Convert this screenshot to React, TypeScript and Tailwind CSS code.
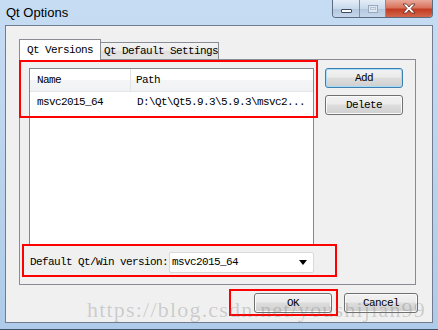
import React from 'react';

const mono = "font-['Liberation_Mono',monospace] text-[11px] tracking-[-0.6px] text-black whitespace-nowrap";

const btnBase =
  'flex items-center justify-center rounded-[3px] border bg-[linear-gradient(to_bottom,#f2f2f2_0%,#ebebeb_45%,#dddddd_50%,#cfcfcf_100%)]';

const WinButton = ({ label, width, focused }: { label: string; width: string; focused?: boolean }) => (
  <div
    className={`${btnBase} ${width} h-[20px] ${mono} ${
      focused
        ? 'border-[#3c7fb1] shadow-[inset_0_0_0_1px_#a6dcf5]'
        : 'border-[#707070] shadow-[inset_0_0_0_1px_#fbfbfb]'
    }`}
  >
    {label}
  </div>
);

const TitleButtons = () => (
  <div className="ml-auto flex h-[18px] rounded-b-[4px] border border-t-0 border-[#5a6b82] overflow-hidden">
    <div className="w-[27px] flex items-center justify-center bg-[linear-gradient(to_bottom,#e4edf7_0%,#c9d9ec_50%,#b2c6de_51%,#c6d7ea_100%)] border-r border-[#7d8ea6]">
      <div className="mt-[5px] w-[11px] h-[4px] bg-white border border-[#3c4a5e] rounded-[1px]" />
    </div>
    <div className="w-[26px] flex items-center justify-center bg-[linear-gradient(to_bottom,#e4edf7_0%,#c9d9ec_50%,#b2c6de_51%,#c6d7ea_100%)] border-r border-[#7d8ea6]">
      <div className="w-[10px] h-[8px] border border-[#9aa8bb] bg-[#dfe7f1] flex items-center justify-center">
        <div className="w-[6px] h-[3px] border border-[#b7c3d2]" />
      </div>
    </div>
    <div className="w-[46px] flex items-center justify-center bg-[linear-gradient(to_bottom,#e9a99b_0%,#d9735d_45%,#c43c22_55%,#d2664a_100%)]">
      <svg width="14" height="11" viewBox="0 0 14 11">
        <path
          d="M1 1 H4.5 L7 4 L9.5 1 H13 L9 5.5 L13 10 H9.5 L7 7 L4.5 10 H1 L5 5.5 Z"
          fill="#ffffff"
          stroke="#5a2a22"
          strokeWidth="0.8"
          strokeLinejoin="round"
        />
      </svg>
    </div>
  </div>
);

export default function App() {
  return (
    <div className="relative w-[438px] h-[330px] overflow-hidden flex flex-col px-[5px] pb-[6px] bg-[linear-gradient(to_bottom,#c6dcf3_0%,#b9d2ec_60%,#aecbe9_100%)] border-b border-[#3f5068]">
      {/* title bar */}
      <div className="h-[25px] flex items-start">
        <span className="ml-px pt-[5px] font-['Liberation_Sans',sans-serif] text-[13px] leading-[15px] text-black">
          Qt Options
        </span>
        <TitleButtons />
      </div>

      {/* client area */}
      <div className="flex-1 flex flex-col bg-[#f0f0f0] border border-[#6f7d8f] pl-[13px] pt-[13px]">
        {/* tabs */}
        <div className="flex items-end">
          <div className={`relative z-10 -mb-px w-[82px] h-[21px] bg-white border border-b-0 border-[#898c95] flex items-center pl-[7px] ${mono}`}>
            Qt Versions
          </div>
          <div className={`-ml-px w-[119px] h-[17px] overflow-hidden bg-[linear-gradient(to_bottom,#f3f3f3_0%,#ebebeb_50%,#dedede_51%,#e4e4e4_100%)] border border-b-0 border-[#898c95] flex items-center pl-[3px] ${mono}`}>
            Qt Default Settings
          </div>
        </div>

        {/* pane */}
        <div className="w-[397px] h-[226px] border border-[#898c95] bg-[#f0f0f0] pl-[9px] pt-[8px] flex flex-col">
          <div className="flex items-start">
            <div className="w-[285px] h-[178px] border border-[#828790] bg-white flex flex-col">
              <div className="h-[23px] flex border-b border-[#e5e5e5] bg-[linear-gradient(to_bottom,#ffffff_0%,#ffffff_50%,#f4f5f7_51%,#f1f2f4_100%)]">
                <div className={`w-[101px] flex items-center pl-[7px] border-r border-[#e3e3e3] ${mono}`}>Name</div>
                <div className={`flex-1 flex items-center pl-[5px] ${mono}`}>Path</div>
              </div>
              <div className="h-[20px] flex items-center">
                <div className={`w-[101px] pl-[7px] ${mono}`}>msvc2015_64</div>
                <div className={`pl-[6px] ${mono}`}>D:\Qt\Qt5.9.3\5.9.3\msvc2...</div>
              </div>
            </div>
            <div className="ml-[11px] flex flex-col gap-[7px]">
              <WinButton label="Add" width="w-[78px]" focused />
              <WinButton label="Delete" width="w-[78px]" />
            </div>
          </div>

          <div className="mt-[6px] flex items-center h-[21px]">
            <span className={`ml-px ${mono}`}>Default Qt/Win version:</span>
            <div className="ml-px w-[145px] h-[21px] bg-white border border-[#d9d9d9] rounded-[2px] flex items-center pl-[2px] pr-[6px]">
              <span className={mono}>msvc2015_64</span>
              <svg className="ml-auto" width="8" height="5" viewBox="0 0 8 5">
                <path d="M0 0 H8 L4 5 Z" fill="#000" />
              </svg>
            </div>
          </div>
        </div>

        {/* dialog buttons */}
        <div className="mt-[8px] flex justify-end gap-[12px] pr-[14px]">
          <WinButton label="OK" width="w-[78px]" />
          <WinButton label="Cancel" width="w-[74px]" />
        </div>
      </div>

      {/* annotation boxes */}
      <div className="pointer-events-none absolute left-[19px] top-[60px] w-[299px] h-[58px] border-2 border-[#ff0000]" />
      <div className="pointer-events-none absolute left-[22px] top-[244px] w-[315px] h-[33px] border-2 border-[#ff0000]" />
      <div className="pointer-events-none absolute left-[229px] top-[289px] w-[109px] h-[27px] border-2 border-[#ff0000]" />

      {/* watermark */}
      <div className="pointer-events-none absolute left-[87px] top-[299px] font-['Liberation_Serif',serif] text-[22px] leading-[22px] tracking-[1.2px] text-[rgba(110,110,110,0.28)] whitespace-nowrap">
        https://blog.csdn.net/youshijian99
      </div>
    </div>
  );
}
